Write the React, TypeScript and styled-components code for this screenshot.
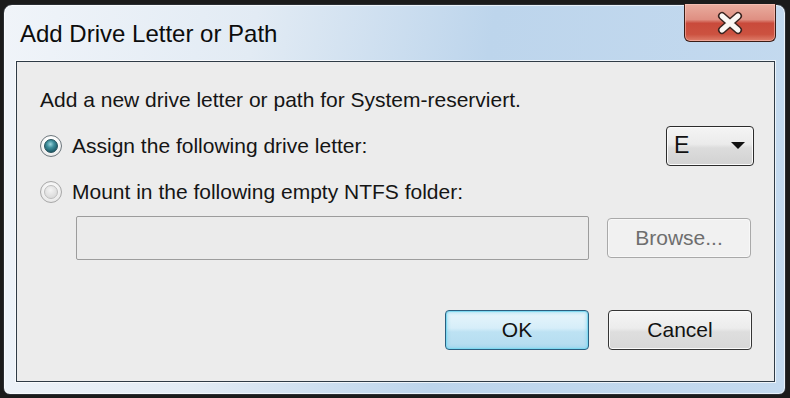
import styled, { createGlobalStyle } from "styled-components";

const GlobalStyle = createGlobalStyle`
  html, body {
    margin: 0;
    padding: 0;
    background: #1b1b1b;
  }
  body {
    width: 790px;
    height: 398px;
    overflow: hidden;
    font-family: "Liberation Sans", Arial, sans-serif;
  }
`;

const Window = styled.div`
  box-sizing: border-box;
  margin: 4px 0 0 3px;
  width: 783px;
  height: 391px;
  border: 1px solid #2a2e33;
  border-radius: 9px 9px 7px 7px;
  background: linear-gradient(100deg, #f0f4f9 0%, #e2ebf4 30%, #bdd5ec 58%, #c4daef 100%);
  box-shadow: inset 0 0 0 1px rgba(255, 255, 255, 0.65);
  display: flex;
  flex-direction: column;
`;

const TitleBar = styled.div`
  height: 56px;
  display: flex;
  justify-content: space-between;
  align-items: flex-start;
  padding: 0 9px 0 16px;
`;

const Title = styled.div`
  align-self: center;
  font-size: 24px;
  color: #0c0c0c;
  padding-top: 1px;
`;

const CloseButton = styled.div`
  box-sizing: border-box;
  width: 92px;
  height: 38px;
  margin-top: -1px;
  border: 1px solid #3a1c16;
  border-top: none;
  border-radius: 0 0 6px 6px;
  background: linear-gradient(
    180deg,
    #e9ad9f 0%,
    #df8f82 42%,
    #c94a3b 52%,
    #cc5240 82%,
    #de7f6c 100%
  );
  box-shadow: inset 0 0 0 1px rgba(255, 205, 195, 0.5);
  display: flex;
  align-items: center;
  justify-content: center;
`;

const Client = styled.div`
  box-sizing: border-box;
  margin: 0 10px 12px 12px;
  flex: 1;
  border: 1px solid #2f3b46;
  background: #ececec;
  box-shadow: 0 0 0 1px rgba(255, 255, 255, 0.7);
  padding: 26px 22px 0 23px;
  display: flex;
  flex-direction: column;
  font-size: 21px;
  color: #151515;
`;

const Intro = styled.div`
  line-height: 24px;
  height: 24px;
`;

const Row = styled.div<{ $top: number; $height: number }>`
  display: flex;
  align-items: center;
  margin-top: ${({ $top }) => $top}px;
  height: ${({ $height }) => $height}px;
`;

const RadioLabel = styled.label`
  display: flex;
  align-items: center;
  gap: 10px;
  flex: 1;
`;

const Radio = styled.span<{ $checked?: boolean }>`
  box-sizing: border-box;
  width: 22px;
  height: 22px;
  border-radius: 50%;
  border: 1px solid ${({ $checked }) => ($checked ? "#6e787e" : "#a8a8a8")};
  background: ${({ $checked }) =>
    $checked
      ? "radial-gradient(circle at 50% 40%, #ffffff 40%, #dadada 100%)"
      : "radial-gradient(circle at 50% 40%, #f6f6f6 40%, #dedede 100%)"};
  display: flex;
  align-items: center;
  justify-content: center;
  &::after {
    content: "";
    width: 12px;
    height: 12px;
    border-radius: 50%;
    border: 1px solid ${({ $checked }) => ($checked ? "#24505a" : "#bdbdbd")};
    background: ${({ $checked }) =>
      $checked
        ? "radial-gradient(circle at 45% 35%, #9ed6de 0%, #3f8f9c 35%, #1c5664 80%)"
        : "radial-gradient(circle at 45% 35%, #f4f4f4 0%, #dcdcdc 70%)"};
  }
`;

const Dropdown = styled.div`
  box-sizing: border-box;
  width: 88px;
  height: 40px;
  margin-right: -2px;
  border: 1px solid #2c2c2c;
  border-radius: 4px;
  background: linear-gradient(180deg, #f4f4f4 0%, #ebebeb 45%, #dcdcdc 55%, #d2d2d2 100%);
  box-shadow: inset 0 0 0 1px #fbfbfb;
  display: flex;
  align-items: center;
  justify-content: space-between;
  padding: 0 8px 0 7px;
  font-size: 23px;
  color: #111;
`;

const Arrow = styled.span`
  width: 0;
  height: 0;
  border-left: 7px solid transparent;
  border-right: 7px solid transparent;
  border-top: 7px solid #111;
`;

const PathInput = styled.div`
  box-sizing: border-box;
  margin-left: 36px;
  width: 513px;
  height: 44px;
  border: 1px solid #9c9c9c;
  border-radius: 2px;
  background: #ebebeb;
`;

const Button = styled.div<{ $variant?: "default" | "normal" | "disabled" }>`
  box-sizing: border-box;
  width: 144px;
  height: 40px;
  border-radius: 4px;
  display: flex;
  align-items: center;
  justify-content: center;
  font-size: 21px;
  border: 1px solid
    ${({ $variant }) =>
      $variant === "default" ? "#2a5f80" : $variant === "disabled" ? "#a9a9a9" : "#353535"};
  color: ${({ $variant }) => ($variant === "disabled" ? "#6e6e6e" : "#121212")};
  background: ${({ $variant }) =>
    $variant === "default"
      ? "linear-gradient(180deg, #e8f5fb 0%, #d6eef9 45%, #bde2f3 55%, #b3dcf0 100%)"
      : $variant === "disabled"
      ? "#f1f1f1"
      : "linear-gradient(180deg, #f5f5f5 0%, #ececec 45%, #dedede 55%, #d8d8d8 100%)"};
  box-shadow: ${({ $variant }) =>
    $variant === "default"
      ? "inset 0 0 0 1px #7fd8f0, inset 0 0 3px 2px rgba(120, 210, 240, 0.5)"
      : $variant === "disabled"
      ? "inset 0 0 0 1px #f8f8f8"
      : "inset 0 0 0 1px #fafafa"};
`;

const BrowseButton = styled(Button)`
  margin-left: 18px;
`;

const Actions = styled.div`
  display: flex;
  justify-content: flex-end;
  gap: 19px;
  margin-top: 50px;
`;

const CloseGlyph = () => (
  <svg width="28" height="24" viewBox="0 0 28 24">
    <path d="M6 5 L22 19 M22 5 L6 19" stroke="#3a2420" strokeWidth="8" strokeLinecap="round" />
    <path d="M6 5 L22 19 M22 5 L6 19" stroke="#fbf7f4" strokeWidth="5" strokeLinecap="round" />
  </svg>
);

export default function App() {
  return (
    <>
      <GlobalStyle />
      <Window>
        <TitleBar>
          <Title>Add Drive Letter or Path</Title>
          <CloseButton>
            <CloseGlyph />
          </CloseButton>
        </TitleBar>
        <Client>
          <Intro>Add a new drive letter or path for System-reserviert.</Intro>
          <Row $top={13} $height={41}>
            <RadioLabel>
              <Radio $checked />
              Assign the following drive letter:
            </RadioLabel>
            <Dropdown>
              E
              <Arrow />
            </Dropdown>
          </Row>
          <Row $top={15} $height={22}>
            <RadioLabel>
              <Radio />
              Mount in the following empty NTFS folder:
            </RadioLabel>
          </Row>
          <Row $top={13} $height={44}>
            <PathInput />
            <BrowseButton $variant="disabled">Browse...</BrowseButton>
          </Row>
          <Actions>
            <Button $variant="default">OK</Button>
            <Button>Cancel</Button>
          </Actions>
        </Client>
      </Window>
    </>
  );
}
